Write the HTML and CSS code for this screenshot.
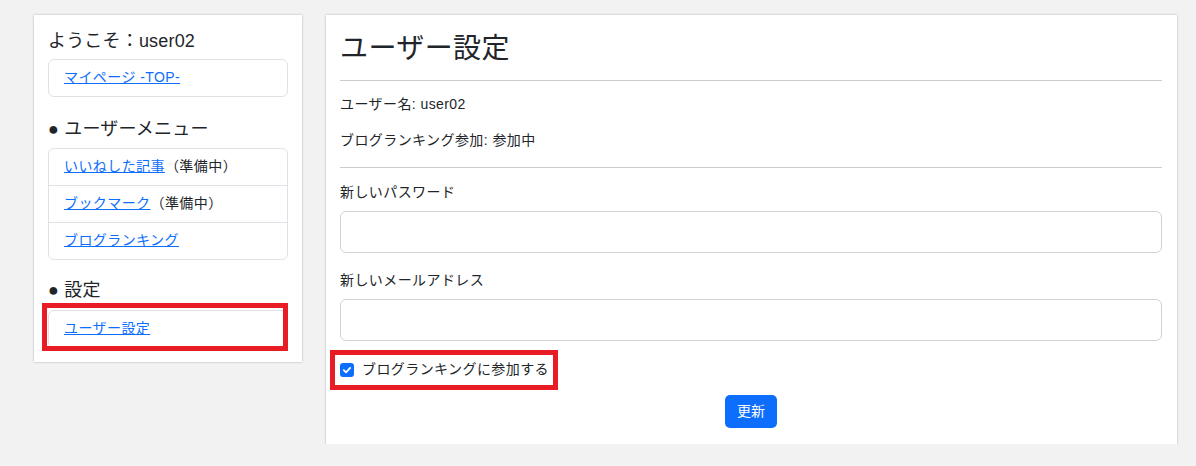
FILE: index.html
```html
<!DOCTYPE html>
<html lang="ja">
<head>
    <meta charset="UTF-8">
    <meta name="viewport" content="width=device-width, initial-scale=1.0">
    <title>ユーザー設定</title>
    <link rel="stylesheet" href="styles.css">
</head>
<body>
    <div class="layout">
        <aside class="sidebar">
            <h3 class="welcome">ようこそ：user02</h3>
            <ul class="list-group">
                <li class="list-item"><a href="#">マイページ -TOP-</a></li>
            </ul>

            <h3 class="menu-title">● ユーザーメニュー</h3>
            <ul class="list-group">
                <li class="list-item"><a href="#">いいねした記事</a>（準備中）</li>
                <li class="list-item"><a href="#">ブックマーク</a>（準備中）</li>
                <li class="list-item"><a href="#">ブログランキング</a></li>
            </ul>

            <h3 class="menu-title settings-title">● 設定</h3>
            <div class="marked marked-side">
                <ul class="list-group">
                    <li class="list-item"><a href="#">ユーザー設定</a></li>
                </ul>
            </div>
        </aside>

        <main class="content">
            <h1>ユーザー設定</h1>
            <hr>
            <p class="info">ユーザー名: user02</p>
            <p class="info second">ブログランキング参加: 参加中</p>
            <hr class="sep">

            <form class="settings-form">
                <label class="field-label" for="password">新しいパスワード</label>
                <input type="password" id="password" class="field">

                <label class="field-label mail" for="email">新しいメールアドレス</label>
                <input type="email" id="email" class="field">

                <div class="check-row">
                    <label class="marked marked-check">
                        <span class="checkbox">
                            <svg width="14" height="14" viewBox="0 0 14 14">
                                <rect width="14" height="14" rx="3" fill="#0d6efd"/>
                                <path d="M3.8 7.2 L6 9.3 L10.2 4.9" fill="none" stroke="#fff" stroke-width="1.8" stroke-linecap="round" stroke-linejoin="round"/>
                            </svg>
                        </span>
                        ブログランキングに参加する
                    </label>
                </div>

                <div class="actions">
                    <button type="submit">更新</button>
                </div>
            </form>
        </main>
    </div>
</body>
</html>
```

FILE: styles.css
```css
* {
    margin: 0;
    padding: 0;
    box-sizing: border-box;
}

body {
    background-color: #f2f2f2;
    font-family: 'Liberation Sans', 'Noto Sans CJK JP', sans-serif;
    color: #212529;
    font-size: 14px;
    letter-spacing: 0.03em;
}

.layout {
    display: flex;
    align-items: flex-start;
    gap: 24px;
    padding: 15px 19px 0 34px;
}

.sidebar {
    width: 268px;
    flex-shrink: 0;
    background-color: #fff;
    padding: 14px 14px 14px;
    box-shadow: 0 0 2px rgba(0, 0, 0, 0.3);
}

.welcome,
.menu-title {
    font-size: 18px;
    font-weight: normal;
    line-height: 24px;
    letter-spacing: 0.01em;
}

.welcome {
    margin-bottom: 6px;
}

.menu-title {
    margin-top: 20px;
    margin-bottom: 7px;
}

.settings-title {
    margin-top: 18px;
    margin-bottom: 8px;
}

.list-group {
    list-style: none;
    border: 1px solid #dee2e6;
    border-radius: 6px;
}

.list-item {
    padding: 7px 15px 8px;
    line-height: 21px;
    border-top: 1px solid #dee2e6;
}

.list-item:first-child {
    border-top: none;
}

a {
    color: #0d6efd;
}

/* red annotation boxes */
.marked {
    position: relative;
}

.marked::after {
    content: '';
    position: absolute;
    border: 5px solid #e81c24;
    pointer-events: none;
}

.marked-side::after {
    left: -6px;
    right: 0;
    top: -7px;
    bottom: -3px;
}

.content {
    flex: 1;
    background-color: #fff;
    padding: 15px 15px 16px 14px;
    box-shadow: 0 0 2px rgba(0, 0, 0, 0.3);
}

h1 {
    font-size: 28px;
    font-weight: normal;
    line-height: 34px;
    margin-top: 2px;
}

hr {
    border: none;
    border-top: 1px solid #cccccc;
    margin-top: 14px;
}

.info {
    line-height: 21px;
    margin-top: 13px;
}

.info.second {
    margin-top: 15px;
}

.sep {
    margin-top: 16px;
}

.settings-form {
    display: flex;
    flex-direction: column;
}

.field-label {
    line-height: 21px;
    margin-top: 14px;
    margin-bottom: 8px;
}

.field-label.mail {
    margin-top: 17px;
}

.field {
    height: 42px;
    border: 1px solid #ced4da;
    border-radius: 6px;
    padding: 6px 12px;
    font-size: 14px;
}

.check-row {
    margin-top: 9px;
    display: flex;
}

.marked-check {
    display: flex;
    align-items: center;
    gap: 8px;
    padding: 9px 9px 10px 14px;
    margin-left: -14px;
    line-height: 21px;
}

.marked-check::after {
    left: 4px;
    right: 0;
    top: 0;
    bottom: 0;
}

.checkbox {
    display: flex;
}

.actions {
    display: flex;
    justify-content: center;
    margin-top: 5px;
}

button {
    background-color: #0d6efd;
    color: #fff;
    border: none;
    border-radius: 5px;
    font-size: 14px;
    font-family: inherit;
    padding: 6px 12px;
    line-height: 21px;
    cursor: pointer;
}
```
